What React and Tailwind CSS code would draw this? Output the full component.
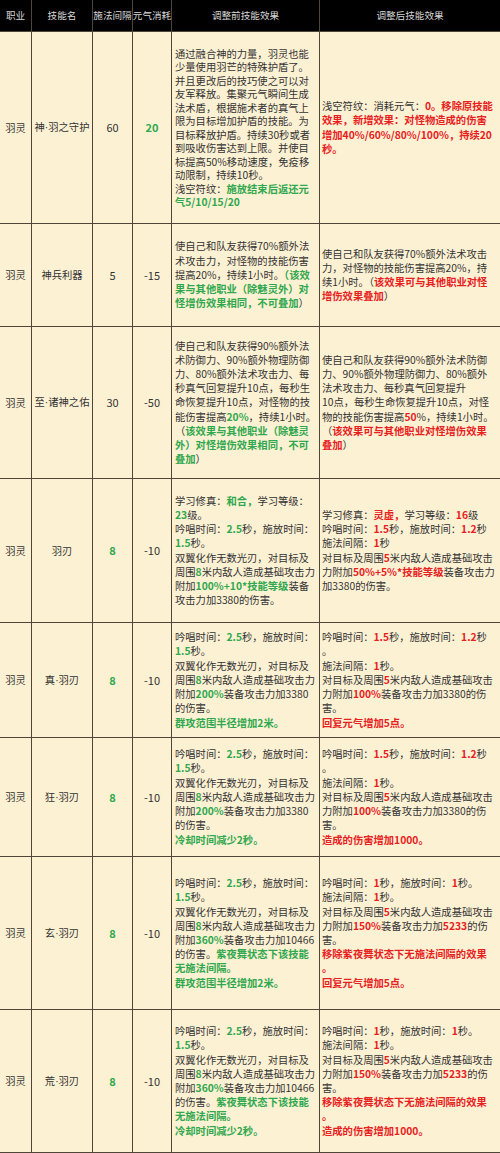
// 羽灵技能调整对比表
const FONT = { fontFamily: '"Noto Sans CJK SC", "Noto Sans", sans-serif' };

// 把 "{g|文字}" / "{r|文字}" 解析成带颜色的片段
function Rich({ line }) {
  const parts = line.split(/\{([gr])\|([^}]*)\}/);
  const out = [];
  for (let i = 0; i < parts.length; i += 3) {
    if (parts[i]) out.push(<span key={i}>{parts[i]}</span>);
    if (parts[i + 1] === "g")
      out.push(<span key={i + "g"} className="font-bold text-[#2fa84f]">{parts[i + 2]}</span>);
    if (parts[i + 1] === "r")
      out.push(<span key={i + "r"} className="font-bold text-[#e8201e]">{parts[i + 2]}</span>);
  }
  return <div className="whitespace-nowrap">{out}</div>;
}

// 技能名里的 "·" 用窄字体显示
function SkillName({ name }) {
  const [a, b] = name.split("·");
  if (b === undefined) return <span>{name}</span>;
  return (
    <span>
      {a}
      <span className="font-['Liberation_Sans',sans-serif]">·</span>
      {b}
    </span>
  );
}

const rows = [
  {
    h: "h-[191px]",
    lead: "leading-[13.5px]",
    name: "神·羽之守护",
    gap: "60",
    cost: "{g|20}",
    before: [
      "通过融合神的力量，羽灵也能",
      "少量使用羽芒的特殊护盾了。",
      "并且更改后的技巧使之可以对",
      "友军释放。集聚元气瞬间生成",
      "法术盾，根据施术者的真气上",
      "限为目标增加护盾的技能。为",
      "目标释放护盾。持续30秒或者",
      "到吸收伤害达到上限。并使目",
      "标提高50%移动速度，免疫移",
      "动限制，持续10秒。",
      "浅空符纹：{g|施放结束后返还元}",
      "{g|气5/10/15/20}",
    ],
    after: [
      "浅空符纹：消耗元气：{r|0。移除原技能}",
      "{r|效果，新增效果：对怪物造成的伤害}",
      "{r|增加40%/60%/80%/100%，持续20}",
      "{r|秒。}",
    ],
  },
  {
    h: "h-[102px]",
    name: "神兵利器",
    gap: "5",
    cost: "-15",
    before: [
      "使自己和队友获得70%额外法",
      "术攻击力，对怪物的技能伤害",
      "提高20%，持续1小时。{g|（该效}",
      "{g|果与其他职业（除魅灵外）对}",
      "{g|怪增伤效果相同，不可叠加}）",
    ],
    after: [
      "使自己和队友获得70%额外法术攻击",
      "力，对怪物的技能伤害提高20%，持",
      "续1小时。（{r|该效果可与其他职业对怪}",
      "{r|增伤效果叠加}）",
    ],
  },
  {
    h: "h-[151px]",
    name: "至·诸神之佑",
    gap: "30",
    cost: "-50",
    before: [
      "使自己和队友获得90%额外法",
      "术防御力、90%额外物理防御",
      "力、80%额外法术攻击力、每",
      "秒真气回复提升10点，每秒生",
      "命恢复提升10点，对怪物的技",
      "能伤害提高{g|20%}，持续1小时。",
      "（{g|该效果与其他职业（除魅灵}",
      "{g|外）对怪增伤效果相同，不可}",
      "{g|叠加}）",
    ],
    after: [
      "使自己和队友获得90%额外法术防御",
      "力、90%额外物理防御力、80%额外",
      "法术攻击力、每秒真气回复提升",
      "10点，每秒生命恢复提升10点，对怪",
      "物的技能伤害提高{r|50}%，持续1小时。",
      "（{r|该效果可与其他职业对怪增伤效果}",
      "{r|叠加}）",
    ],
  },
  {
    h: "h-[143px]",
    name: "羽刃",
    gap: "{g|8}",
    cost: "-10",
    before: [
      "学习修真：{g|和合，}学习等级：",
      "{g|23}级。",
      "吟唱时间：{g|2.5}秒，施放时间：",
      "{g|1.5}秒。",
      "双翼化作无数光刃，对目标及",
      "周围{g|8}米内敌人造成基础攻击力",
      "附加{g|100%+10*技能等级}装备",
      "攻击力加3380的伤害。",
    ],
    after: [
      "学习修真：{r|灵虚，}学习等级：{r|16}级",
      "吟唱时间：{r|1.5}秒，施放时间：{r|1.2}秒",
      "施法间隔：{r|1}秒",
      "对目标及周围{r|5}米内敌人造成基础攻击",
      "力附加{r|50%+5%*技能等级}装备攻击力",
      "加3380的伤害。",
    ],
  },
  {
    h: "h-[114px]",
    name: "真·羽刃",
    gap: "{g|8}",
    cost: "-10",
    before: [
      "吟唱时间：{g|2.5}秒，施放时间：",
      "{g|1.5}秒。",
      "双翼化作无数光刃，对目标及",
      "周围{g|8}米内敌人造成基础攻击力",
      "附加{g|200%}装备攻击力加3380",
      "的伤害。",
      "{g|群攻范围半径增加2米。}",
    ],
    after: [
      "吟唱时间：{r|1.5}秒，施放时间：{r|1.2}秒",
      "。",
      "施法间隔：{r|1}秒。",
      "对目标及周围{r|5}米内敌人造成基础攻击",
      "力附加{r|100%}装备攻击力加3380的伤",
      "害。",
      "{r|回复元气增加5点。}",
    ],
  },
  {
    h: "h-[118px]",
    name: "狂·羽刃",
    gap: "{g|8}",
    cost: "-10",
    before: [
      "吟唱时间：{g|2.5}秒，施放时间：",
      "{g|1.5}秒。",
      "双翼化作无数光刃，对目标及",
      "周围{g|8}米内敌人造成基础攻击力",
      "附加{g|200%}装备攻击力加3380",
      "的伤害。",
      "{g|冷却时间减少2秒。}",
    ],
    after: [
      "吟唱时间：{r|1.5}秒，施放时间：{r|1.2}秒",
      "。",
      "施法间隔：{r|1}秒。",
      "对目标及周围{r|5}米内敌人造成基础攻击",
      "力附加{r|100%}装备攻击力加3380的伤",
      "害。",
      "{r|造成的伤害增加1000。}",
    ],
  },
  {
    h: "h-[152px]",
    name: "玄·羽刃",
    gap: "{g|8}",
    cost: "-10",
    before: [
      "吟唱时间：{g|2.5}秒，施放时间：",
      "{g|1.5}秒。",
      "双翼化作无数光刃，对目标及",
      "周围{g|8}米内敌人造成基础攻击力",
      "附加{g|360%}装备攻击力加10466",
      "的伤害。{g|紫夜舞状态下该技能}",
      "{g|无施法间隔。}",
      "{g|群攻范围半径增加2米。}",
    ],
    after: [
      "吟唱时间：{r|1}秒，施放时间：{r|1}秒。",
      "施法间隔：{r|1}秒。",
      "对目标及周围{r|5}米内敌人造成基础攻击",
      "力附加{r|150%}装备攻击力加{r|5233}的伤",
      "害。",
      "{r|移除紫夜舞状态下无施法间隔的效果}",
      "{r|。}",
      "{r|回复元气增加5点。}",
    ],
  },
  {
    h: "h-[142px]",
    name: "荒·羽刃",
    gap: "{g|8}",
    cost: "-10",
    before: [
      "吟唱时间：{g|2.5}秒，施放时间：",
      "{g|1.5}秒。",
      "双翼化作无数光刃，对目标及",
      "周围{g|8}米内敌人造成基础攻击力",
      "附加{g|360%}装备攻击力加10466",
      "的伤害。{g|紫夜舞状态下该技能}",
      "{g|无施法间隔。}",
      "{g|冷却时间减少2秒。}",
    ],
    after: [
      "吟唱时间：{r|1}秒，施放时间：{r|1}秒。",
      "施法间隔：{r|1}秒。",
      "对目标及周围{r|5}米内敌人造成基础攻击",
      "力附加{r|150%}装备攻击力加{r|5233}的伤",
      "害。",
      "{r|移除紫夜舞状态下无施法间隔的效果}",
      "{r|。}",
      "{r|造成的伤害增加1000。}",
    ],
  },
];

const headers = ["职业", "技能名", "施法间隔", "元气消耗", "调整前技能效果", "调整后技能效果"];

export default function App() {
  return (
    <div
      style={FONT}
      className="w-[500px] h-[1153px] bg-[#4f4638] pb-px text-[10.3px] text-[#333] overflow-hidden"
    >
      <div className="grid grid-cols-[31px_60px_39px_38px_147px_180px] gap-px">
        {/* 表头 */}
        {headers.map((t) => (
          <div
            key={t}
            className="h-[31px] bg-black text-[#d8d8d8] flex items-center justify-center whitespace-nowrap text-[9.6px]"
          >
            {t}
          </div>
        ))}

        {/* 数据行 */}
        {rows.map((r) => {
          const cell = `${r.h} bg-[#fdf1d3] flex items-center`;
          const lead = r.lead ?? "leading-[14.2px]";
          return [
            <div key={r.name + "a"} className={`${cell} justify-center`}>羽灵</div>,
            <div key={r.name + "b"} className={`${cell} justify-center whitespace-nowrap`}>
              <SkillName name={r.name} />
            </div>,
            <div key={r.name + "c"} className={`${cell} justify-center text-[11px]`}>
              <Rich line={r.gap} />
            </div>,
            <div key={r.name + "d"} className={`${cell} justify-center text-[11px]`}>
              <Rich line={r.cost} />
            </div>,
            <div key={r.name + "e"} className={`${cell} pl-[3px] ${lead}`}>
              <div>
                {r.before.map((l, i) => (
                  <Rich key={i} line={l} />
                ))}
              </div>
            </div>,
            <div key={r.name + "f"} className={`${cell} pl-[2px] leading-[14.2px]`}>
              <div>
                {r.after.map((l, i) => (
                  <Rich key={i} line={l} />
                ))}
              </div>
            </div>,
          ];
        })}
      </div>
    </div>
  );
}
